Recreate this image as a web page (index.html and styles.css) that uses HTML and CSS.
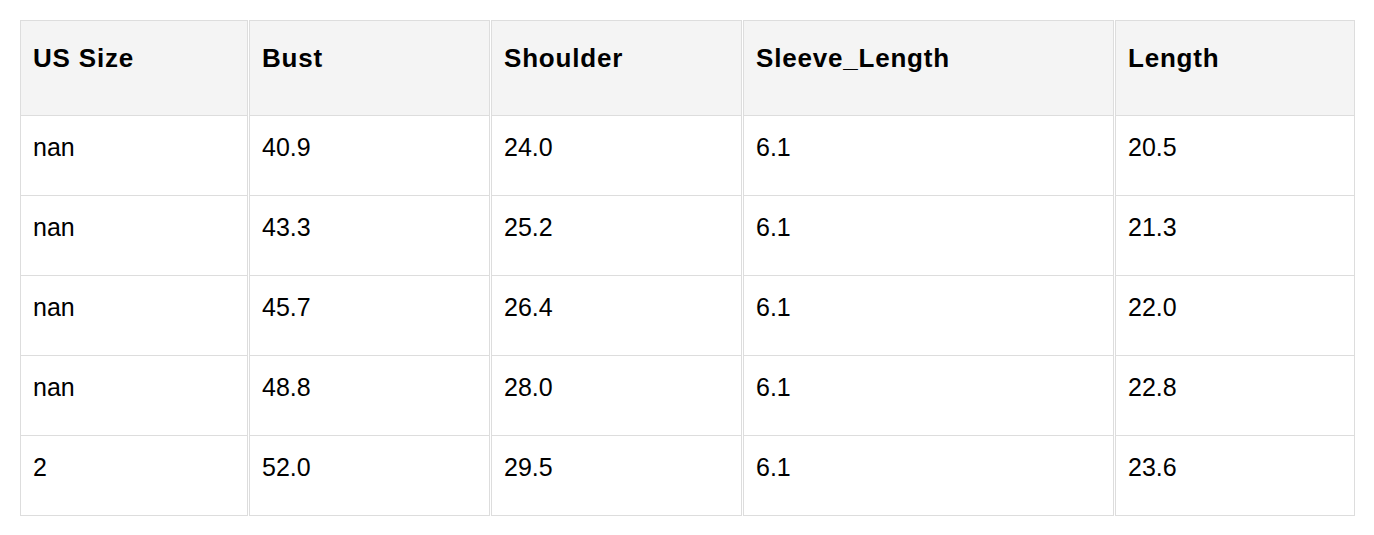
FILE: index.html
```html
<!DOCTYPE html>
<html>
<head>
<meta charset="utf-8">
<link rel="stylesheet" href="styles.css">
</head>
<body>
<table class="size-table">
  <colgroup>
    <col class="c1">
    <col class="c2">
    <col class="c3">
    <col class="c4">
    <col class="c5">
  </colgroup>
  <thead>
    <tr class="head-row">
      <th>US Size</th>
      <th>Bust</th>
      <th>Shoulder</th>
      <th>Sleeve_Length</th>
      <th>Length</th>
    </tr>
  </thead>
  <tbody>
    <tr class="data-row"><td>nan</td><td>40.9</td><td>24.0</td><td>6.1</td><td>20.5</td></tr>
    <tr class="data-row"><td>nan</td><td>43.3</td><td>25.2</td><td>6.1</td><td>21.3</td></tr>
    <tr class="data-row"><td>nan</td><td>45.7</td><td>26.4</td><td>6.1</td><td>22.0</td></tr>
    <tr class="data-row"><td>nan</td><td>48.8</td><td>28.0</td><td>6.1</td><td>22.8</td></tr>
    <tr class="data-row"><td>2</td><td>52.0</td><td>29.5</td><td>6.1</td><td>23.6</td></tr>
  </tbody>
</table>
</body>
</html>
```

FILE: styles.css
```css
html, body {
  margin: 0;
  padding: 0;
  background: #ffffff;
}

body {
  font-family: "Liberation Sans", Arial, sans-serif;
  color: #000000;
}

.size-table {
  margin: 20px 0 0 19px;
  border-collapse: separate;
  border-spacing: 1px 0;
  table-layout: fixed;
  width: 1337px;
}

.c1 { width: 228px; }
.c2 { width: 241px; }
.c3 { width: 251px; }
.c4 { width: 371px; }
.c5 { width: 240px; }

.size-table th,
.size-table td {
  box-sizing: border-box;
  text-align: left;
  vertical-align: top;
  padding-left: 12px;
  padding-right: 10px;
  line-height: 30px;
}

.size-table th {
  background: #f4f4f4;
  border: 1px solid #dddddd;
  font-size: 26px;
  font-weight: bold;
  letter-spacing: 0.8px;
  padding-top: 22px;
  padding-bottom: 0;
}

.size-table td {
  border: 1px solid #dddddd;
  border-top: 0;
  font-size: 25px;
  padding-top: 16px;
  padding-bottom: 0;
}

.head-row { height: 96px; }
.data-row { height: 80px; }
```
